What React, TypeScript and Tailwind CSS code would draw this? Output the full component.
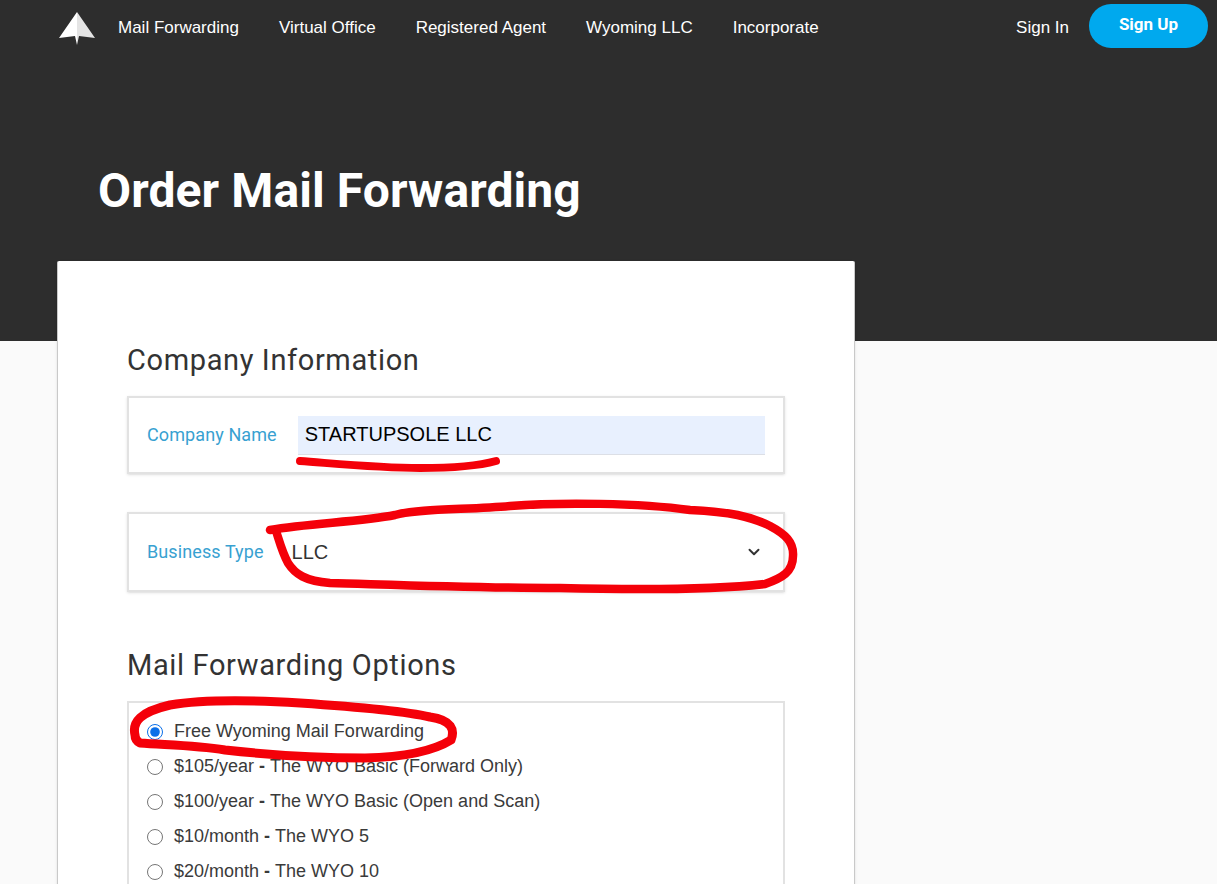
import { ChevronDown } from "lucide-react";

const navLinks = ["Mail Forwarding", "Virtual Office", "Registered Agent", "Wyoming LLC", "Incorporate"];

const options = [
  { price: "", label: "Free Wyoming Mail Forwarding", checked: true },
  { price: "$105/year", label: "The WYO Basic (Forward Only)" },
  { price: "$100/year", label: "The WYO Basic (Open and Scan)" },
  { price: "$10/month", label: "The WYO 5" },
  { price: "$20/month", label: "The WYO 10" },
];

function Logo() {
  return (
    <svg width="38" height="34" viewBox="0 0 38 34" className="shrink-0 mt-[6px]">
      <path d="M19 0 L37 26 L21 24 L19 33 Z" fill="#e4e4e4" />
      <path d="M19 0 L1 26 L17 24 L19 33 Z" fill="#ffffff" />
    </svg>
  );
}

function Scribbles() {
  return (
    <svg width="1217" height="884" viewBox="0 0 1217 884" fill="none" className="absolute left-0 top-0 pointer-events-none">
      <g stroke="#f40009" strokeLinecap="round" strokeLinejoin="round">
        <path strokeWidth="8" d="M300 461 C340 464 380 468 420 468 C450 468 478 466 496 461" />
        <path
          strokeWidth="8.5"
          d="M270 530 C310 523 360 522 395 515 C420 508 470 510 510 506 C560 502 640 503 690 510 C730 512 750 516 770 526 C785 534 794 542 793 556 C793 572 782 578 765 584 C720 589 640 590 560 588 C480 588 400 585 330 583 C305 581 295 574 288 563 C282 552 279 540 276 531"
        />
        <path
          strokeWidth="9"
          d="M135 735 C132 722 140 712 170 705 C200 700 250 700 300 703 C345 706 400 710 430 717 C452 720 455 730 451 740 C435 750 405 757 365 758 C320 758 270 755 225 750 C195 745 165 745 140 743 C136 741 135 738 135 735"
        />
      </g>
    </svg>
  );
}

export default function App() {
  return (
    <div className="relative w-[1217px] h-[884px] overflow-hidden bg-[#fafafa] font-['Liberation_Sans',Arial,sans-serif]">
      {/* Dark hero */}
      <div className="bg-[#2d2d2d] h-[341px]">
        <nav className="flex items-center h-[52px] pl-[58px] pr-[9px]">
          <Logo />
          <div className="flex items-center gap-[40px] ml-[22px] mt-[4px] text-[17px] text-white">
            {navLinks.map((l) => (
              <a key={l} className="whitespace-nowrap">{l}</a>
            ))}
          </div>
          <a className="ml-auto mt-[4px] text-[17px] text-white">Sign In</a>
          <button className="ml-[20px] w-[119px] h-[44px] pb-[2px] rounded-full bg-[#00a9ee] text-white text-[17px] font-bold font-['Roboto',sans-serif]">
            Sign Up
          </button>
        </nav>
        <h1 className="ml-[98px] mt-[105px] text-[48px] leading-[68px] font-bold text-white font-['Roboto',sans-serif] tracking-[0.1px]">
          Order Mail Forwarding
        </h1>
      </div>

      {/* Form card */}
      <div className="absolute left-[57px] top-[261px] w-[798px] h-[700px] bg-white rounded-[2px] border-x border-[#c9c9c9] shadow-sm px-[69px] pt-[79px]">
        <h2 className="text-[29px] leading-[40px] text-[#333] font-['Roboto',sans-serif] tracking-[0.63px]">Company Information</h2>

        <div className="mt-[16px] w-[658px] h-[78px] border-2 border-[#e2e2e2] bg-white shadow-sm flex items-center pl-[18px] pr-[18px]">
          <label className="mb-[2px] text-[18px] text-[#38a1d1] font-['Roboto',sans-serif] tracking-[0.1px] whitespace-nowrap">Company Name</label>
          <input
            readOnly
            value="STARTUPSOLE LLC"
            className="ml-[21px] flex-1 h-[39px] bg-[#e8f0fe] border-b border-[#dcdfe6] px-[7px] text-[20px] text-black outline-none"
          />
        </div>

        <div className="mt-[38px] w-[658px] h-[80px] border-2 border-[#e2e2e2] bg-white shadow-sm flex items-center pl-[18px] pr-[20px]">
          <label className="mb-[2px] text-[18px] text-[#38a1d1] font-['Roboto',sans-serif] tracking-[0.1px] whitespace-nowrap">Business Type</label>
          <span className="ml-[28px] flex-1 text-[20px] text-[#333]">LLC</span>
          <ChevronDown size={18} strokeWidth={2.6} className="text-[#333]" />
        </div>

        <h2 className="mt-[53px] text-[29px] leading-[40px] text-[#333] font-['Roboto',sans-serif] tracking-[0.63px]">Mail Forwarding Options</h2>

        <div className="mt-[16px] w-[658px] h-[300px] border-2 border-[#e2e2e2] pl-[18px] pt-[11px] flex flex-col">
          {options.map((o) => (
            <label key={o.label} className="flex items-center h-[35px] text-[18px] text-[#3a3a3a]">
              <input type="radio" name="plan" defaultChecked={o.checked} className="w-4 h-4 accent-[#0b6fe8]" />
              <span className="ml-[11px]">
                {o.price}
                {o.price && <b> - </b>}
                {o.label}
              </span>
            </label>
          ))}
        </div>
      </div>

      <Scribbles />
    </div>
  );
}
